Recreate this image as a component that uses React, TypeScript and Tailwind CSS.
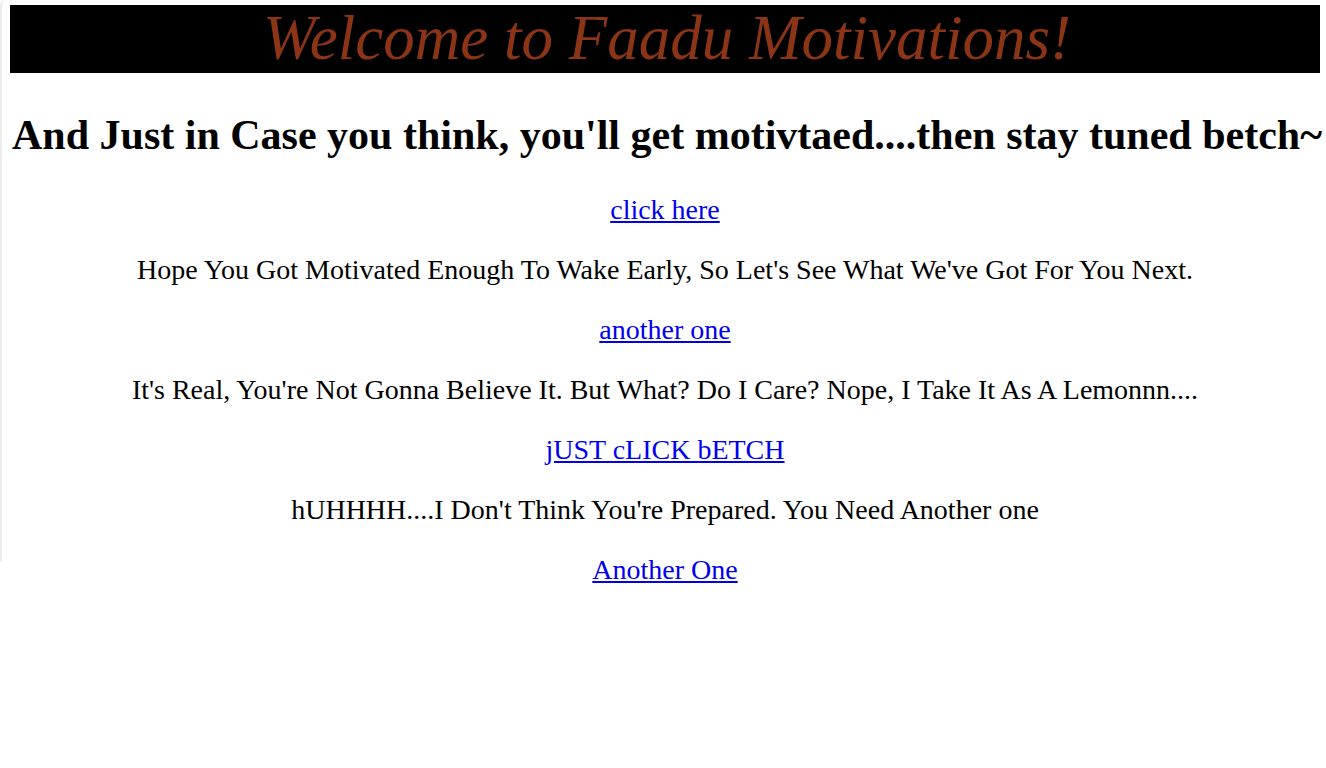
export default function App() {
  const items = [
    { kind: "link", text: "click here" },
    { kind: "p", text: "Hope You Got Motivated Enough To Wake Early, So Let's See What We've Got For You Next." },
    { kind: "link", text: "another one" },
    { kind: "p", text: "It's Real, You're Not Gonna Believe It. But What? Do I Care? Nope, I Take It As A Lemonnn...." },
    { kind: "link", text: "jUST cLICK bETCH" },
    { kind: "p", text: "hUHHHH....I Don't Think You're Prepared. You Need Another one" },
    { kind: "link", text: "Another One" },
  ]

  return (
    <div className="min-h-[768px] bg-white font-['Liberation_Serif',serif] text-black">
      <div className="h-[562px] border-l-2 border-[#ececec] rounded-tl-md pt-[5px] pl-[8px] pr-[6px]">
        <div className="bg-black h-[68px] flex items-center justify-center">
          <h1 className="italic text-[63px] leading-none text-[#8b3516] -mt-[2px] pl-[4px]">
            Welcome to Faadu Motivations!
          </h1>
        </div>

        <div className="text-center">
          <h2 className="font-bold text-[42px] leading-[46px] mt-[39px] mb-[36px] whitespace-nowrap pl-[2px]">
            And Just in Case you think, you'll get motivtaed....then stay tuned betch~
          </h2>

          {items.map((item, i) =>
            item.kind === "link" ? (
              <p key={i} className="text-[28px] leading-[32px] my-[28px]">
                <a href="#" className="text-[#0000ee] underline">
                  {item.text}
                </a>
              </p>
            ) : (
              <p key={i} className="text-[28px] leading-[32px] my-[28px]">
                {item.text}
              </p>
            )
          )}
        </div>
      </div>
    </div>
  )
}
